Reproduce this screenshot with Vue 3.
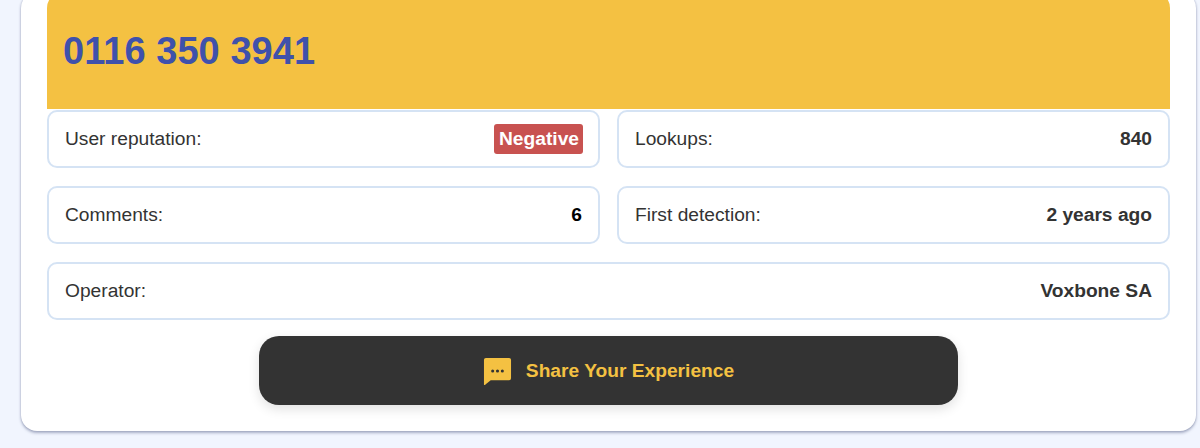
<template>
  <div class="page">
    <div class="card">
      <div class="phone-head">
        <h1>0116 350 3941</h1>
      </div>
      <div class="info-grid">
        <div class="info-row">
          <span>User reputation:</span>
          <span class="badge">Negative</span>
        </div>
        <div class="info-row">
          <span>Lookups:</span>
          <strong>840</strong>
        </div>
        <div class="info-row">
          <span>Comments:</span>
          <strong class="black">6</strong>
        </div>
        <div class="info-row">
          <span>First detection:</span>
          <strong>2 years ago</strong>
        </div>
        <div class="info-row wide">
          <span>Operator:</span>
          <strong>Voxbone SA</strong>
        </div>
      </div>
      <button class="share-btn">
        <svg width="29" height="29" viewBox="0 0 30 30" aria-hidden="true">
          <path d="M3 2h24a2 2 0 0 1 2 2v19a2 2 0 0 1-2 2H8l-5.500 4.500a.6.6 0 0 1-1.500-.4V4a2 2 0 0 1 2-2z" fill="#f4c142" />
          <circle cx="10" cy="15.500" r="1.600" fill="#333" />
          <circle cx="15" cy="15.500" r="1.600" fill="#333" />
          <circle cx="20" cy="15.500" r="1.600" fill="#333" />
        </svg>
        <span>Share Your Experience</span>
      </button>
    </div>
  </div>
</template>

<script setup>
</script>

<style>
html,
body {
  margin: 0;
  background: #f1f5fe;
}
</style>

<style scoped>
.page {
  height: 448px;
  overflow: hidden;
  padding: 0 4px 0 21px;
  font-family: "Liberation Sans", Arial, sans-serif;
}

.card {
  box-sizing: border-box;
  height: 439px;
  margin-top: -8px;
  padding: 0 26px;
  background: #fff;
  border-radius: 16px;
  box-shadow: 0 2px 3px rgba(80, 90, 130, 0.45), 0 0 2px rgba(80, 90, 130, 0.3);
}

.phone-head {
  box-sizing: border-box;
  height: 117px;
  padding: 2px 16px 0;
  display: flex;
  align-items: center;
  background: #f4c142;
  border-radius: 16px 16px 0 0;
}

.phone-head h1 {
  margin: 0;
  font-size: 38px;
  font-weight: 700;
  letter-spacing: 0.05px;
  color: #3f51ab;
}

.info-grid {
  display: grid;
  grid-template-columns: 1fr 1fr;
  gap: 18px 17px;
  margin-top: 1px;
}

.info-row {
  box-sizing: border-box;
  height: 58px;
  padding: 0 16px;
  display: flex;
  align-items: center;
  justify-content: space-between;
  border: 2px solid #d5e3f4;
  border-radius: 10px;
  font-size: 19.200px;
  color: #333;
}

.info-row strong {
  font-weight: 700;
}

.info-row .black {
  color: #000;
}

.wide {
  grid-column: span 2;
}

.badge {
  margin-right: -1px;
  padding: 4px 4px 4px 5px;
  background: #c85250;
  border-radius: 3px;
  color: #fff;
  font-weight: 700;
}

.share-btn {
  width: 699px;
  height: 69px;
  margin: 16px auto 0;
  display: flex;
  align-items: center;
  justify-content: center;
  gap: 14px;
  background: #333;
  border: none;
  border-radius: 20px;
  box-shadow: 0 4px 12px rgba(0, 0, 0, 0.12);
  color: #f4c142;
  font-family: inherit;
  font-size: 19.200px;
  font-weight: 700;
}
</style>
